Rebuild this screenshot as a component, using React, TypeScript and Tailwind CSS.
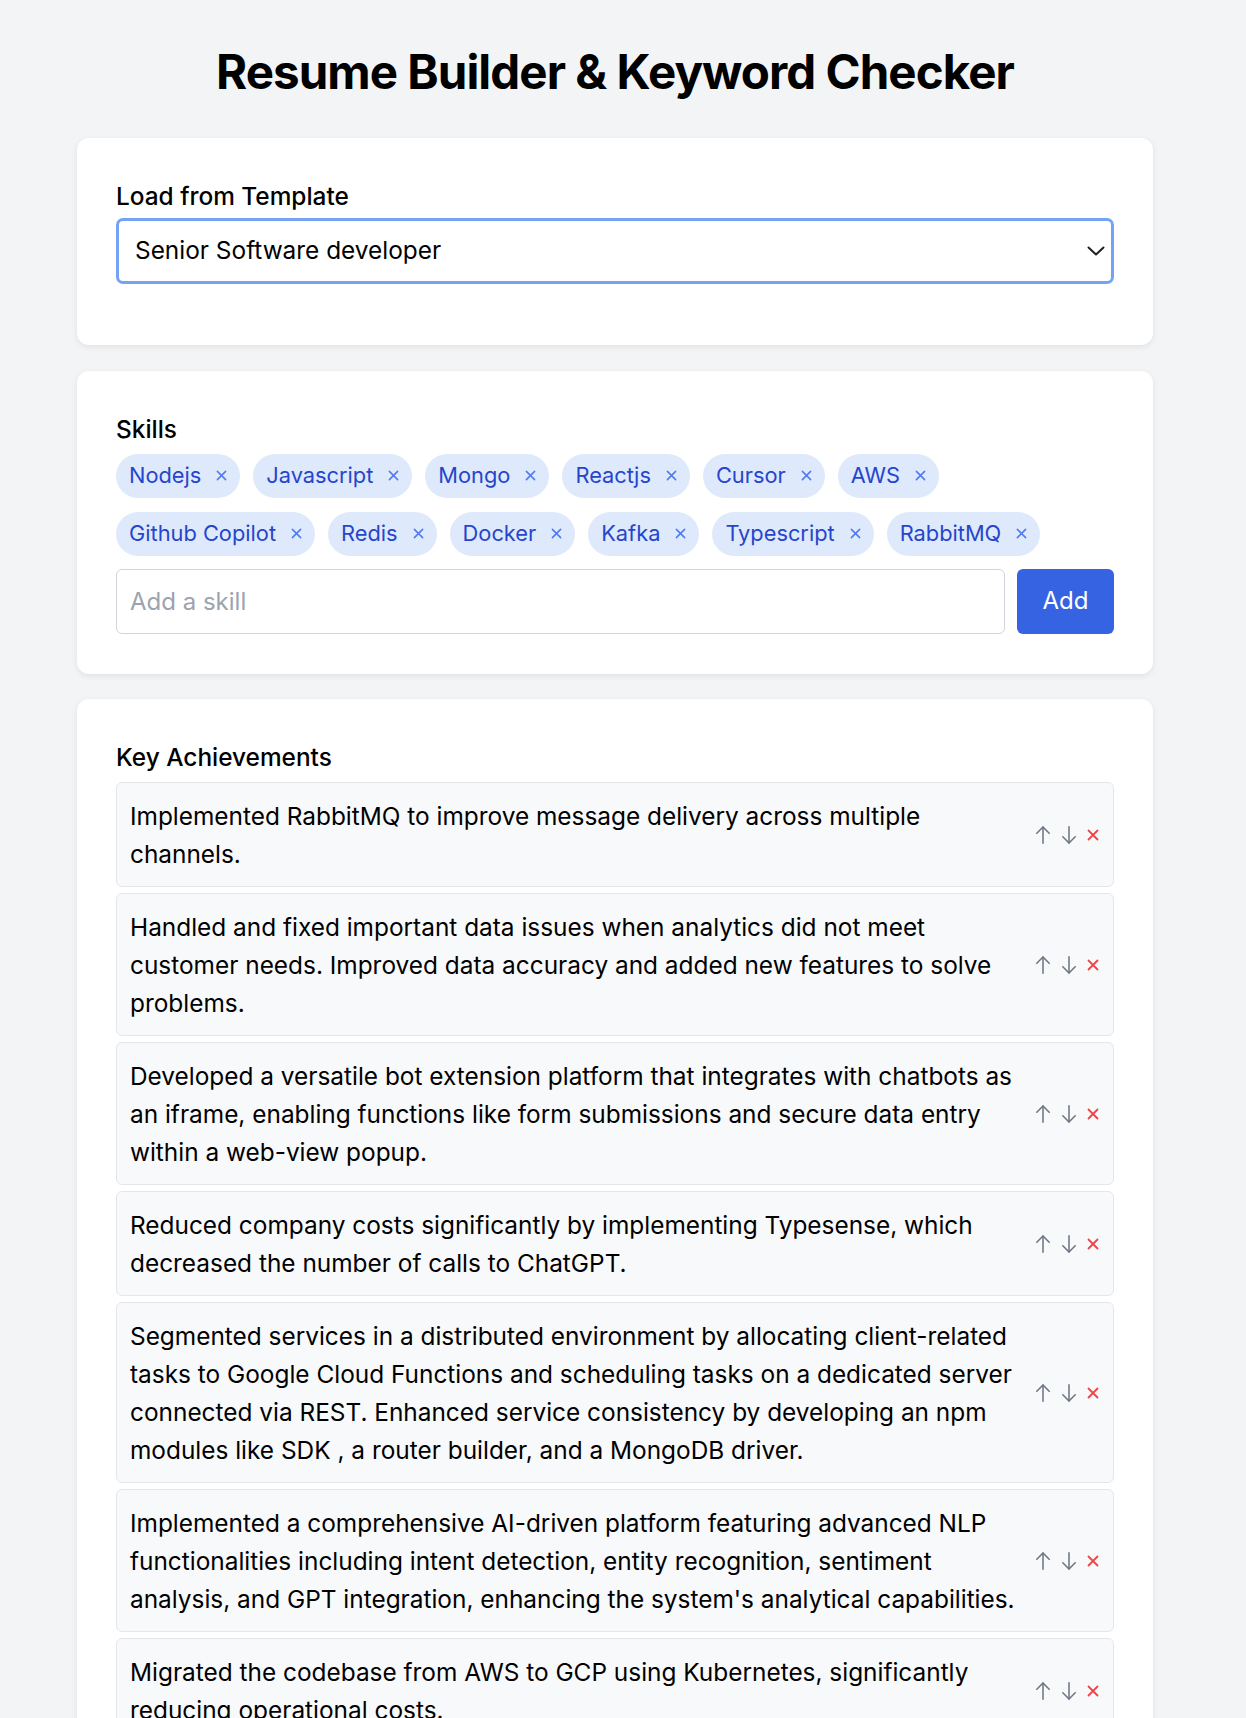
import { useState } from "react";

const initialSkills = [
  "Nodejs",
  "Javascript",
  "Mongo",
  "Reactjs",
  "Cursor",
  "AWS",
  "Github Copilot",
  "Redis",
  "Docker",
  "Kafka",
  "Typescript",
  "RabbitMQ",
];

const initialAchievements = [
  "Implemented RabbitMQ to improve message delivery across multiple channels.",
  "Handled and fixed important data issues when analytics did not meet customer needs. Improved data accuracy and added new features to solve problems.",
  "Developed a versatile bot extension platform that integrates with chatbots as an iframe, enabling functions like form submissions and secure data entry within a web-view popup.",
  "Reduced company costs significantly by implementing Typesense, which decreased the number of calls to ChatGPT.",
  "Segmented services in a distributed environment by allocating client-related tasks to Google Cloud Functions and scheduling tasks on a dedicated server connected via REST. Enhanced service consistency by developing an npm modules like SDK , a router builder, and a MongoDB driver.",
  "Implemented a comprehensive AI-driven platform featuring advanced NLP functionalities including intent detection, entity recognition, sentiment analysis, and GPT integration, enhancing the system's analytical capabilities.",
  "Migrated the codebase from AWS to GCP using Kubernetes, significantly reducing operational costs.",
];

function ArrowUp() {
  return (
    <svg width="16" height="18" viewBox="0 0 16 18" fill="none" stroke="currentColor" strokeWidth="1.5" strokeLinecap="round" strokeLinejoin="round">
      <path d="M8 17.2V1" />
      <path d="M1.8 7.2 8 1l6.2 6.2" />
    </svg>
  );
}

function ArrowDown() {
  return (
    <svg width="16" height="18" viewBox="0 0 16 18" fill="none" stroke="currentColor" strokeWidth="1.5" strokeLinecap="round" strokeLinejoin="round">
      <path d="M8 0.8V17" />
      <path d="M1.8 10.8 8 17l6.2-6.2" />
    </svg>
  );
}

function Cross({ size = 12, width = 1.8 }: { size?: number; width?: number }) {
  return (
    <svg width={size} height={size} viewBox="0 0 12 12" fill="none" stroke="currentColor" strokeWidth={width} strokeLinecap="round">
      <path d="M1.5 1.5l9 9M10.5 1.5l-9 9" />
    </svg>
  );
}

export default function App() {
  const [template, setTemplate] = useState("senior");
  const [skills, setSkills] = useState(initialSkills);
  const [skill, setSkill] = useState("");
  const [items, setItems] = useState(initialAchievements);

  const addSkill = () => {
    const s = skill.trim();
    if (!s) return;
    setSkills([...skills, s]);
    setSkill("");
  };

  const move = (i: number, dir: number) => {
    const j = i + dir;
    if (j < 0 || j >= items.length) return;
    const next = [...items];
    [next[i], next[j]] = [next[j], next[i]];
    setItems(next);
  };

  return (
    <div className="min-h-screen bg-[#f3f4f6] pr-[16px] font-['Inter',sans-serif] text-black">
      <div className="mx-auto w-[1076px] pt-[48px] pb-10">
        <h1 className="text-center text-[47.5px] leading-none font-bold tracking-[-0.02em]">
          Resume Builder &amp; Keyword Checker
        </h1>

        {/* Template */}
        <section className="mt-[42px] rounded-xl bg-white px-[39px] py-10 shadow-[0_2px_6px_rgba(0,0,0,0.08)]">
          <label className="block text-[24.4px] leading-[36px] font-medium">Load from Template</label>
          <div className="relative mt-[4px] mb-[21px]">
            <select
              value={template}
              onChange={(e) => setTemplate(e.target.value)}
              className="h-[66px] w-full appearance-none rounded-[7px] border-[3px] border-[#74a3f5] bg-white pl-[16px] text-[24.4px] outline-none"
            >
              <option value="senior">Senior Software developer</option>
              <option value="frontend">Frontend developer</option>
              <option value="backend">Backend developer</option>
            </select>
            <svg
              className="pointer-events-none absolute top-1/2 right-[9px] -translate-y-1/2"
              width="18"
              height="10"
              viewBox="0 0 18 10"
              fill="none"
              stroke="#1f1f1f"
              strokeWidth="2"
              strokeLinecap="round"
              strokeLinejoin="round"
            >
              <path d="M1.5 1.5 9 8.5l7.5-7" />
            </svg>
          </div>
        </section>

        {/* Skills */}
        <section className="mt-[26px] rounded-xl bg-white px-[39px] py-10 shadow-[0_2px_6px_rgba(0,0,0,0.08)]">
          <label className="block text-[24.4px] leading-[36px] font-medium">Skills</label>
          <div className="mt-[7px] flex flex-wrap gap-x-[13px] gap-y-[14px]">
            {skills.map((s, i) => (
              <span
                key={s + i}
                className="flex h-[44px] items-center gap-[15px] rounded-full bg-[#dfe9fc] pr-[13px] pl-[13px] text-[21.8px] text-[#2546cc]"
              >
                {s}
                <button
                  onClick={() => setSkills(skills.filter((_, k) => k !== i))}
                  className="text-[#4d78ee]"
                  aria-label={`Remove ${s}`}
                >
                  <Cross size={11} width={1.6} />
                </button>
              </span>
            ))}
          </div>
          <div className="mt-[13px] flex gap-3">
            <input
              value={skill}
              onChange={(e) => setSkill(e.target.value)}
              onKeyDown={(e) => e.key === "Enter" && addSkill()}
              placeholder="Add a skill"
              className="h-[65px] flex-1 rounded-[6px] border border-[#d1d5db] px-[13px] text-[24px] outline-none placeholder:text-[#9ca3af]"
            />
            <button
              onClick={addSkill}
              className="h-[65px] w-[97px] rounded-[6px] bg-[#3663e2] text-[24px] text-white"
            >
              Add
            </button>
          </div>
        </section>

        {/* Achievements */}
        <section className="mt-[25px] rounded-xl bg-white px-[39px] py-10 shadow-[0_2px_6px_rgba(0,0,0,0.08)]">
          <label className="block text-[24.4px] leading-[36px] font-medium">Key Achievements</label>
          <div className="mt-[7px] flex flex-col gap-[6px]">
            {items.map((t, i) => (
              <div
                key={t}
                className="flex items-center rounded-[6px] border border-[#e4e6ea] bg-[#f8f9fb] pt-[14px] pr-[14px] pb-[13px] pl-[13px]"
              >
                <p className="w-[897px] text-[24.4px] leading-[38px]">{t}</p>
                <div className="ml-auto flex items-center gap-[10px]">
                  <button onClick={() => move(i, -1)} className="text-[#6b7280]">
                    <ArrowUp />
                  </button>
                  <button onClick={() => move(i, 1)} className="text-[#6b7280]">
                    <ArrowDown />
                  </button>
                  <button
                    onClick={() => setItems(items.filter((_, k) => k !== i))}
                    className="text-[#ef4444]"
                  >
                    <Cross />
                  </button>
                </div>
              </div>
            ))}
          </div>
        </section>
      </div>
    </div>
  );
}
